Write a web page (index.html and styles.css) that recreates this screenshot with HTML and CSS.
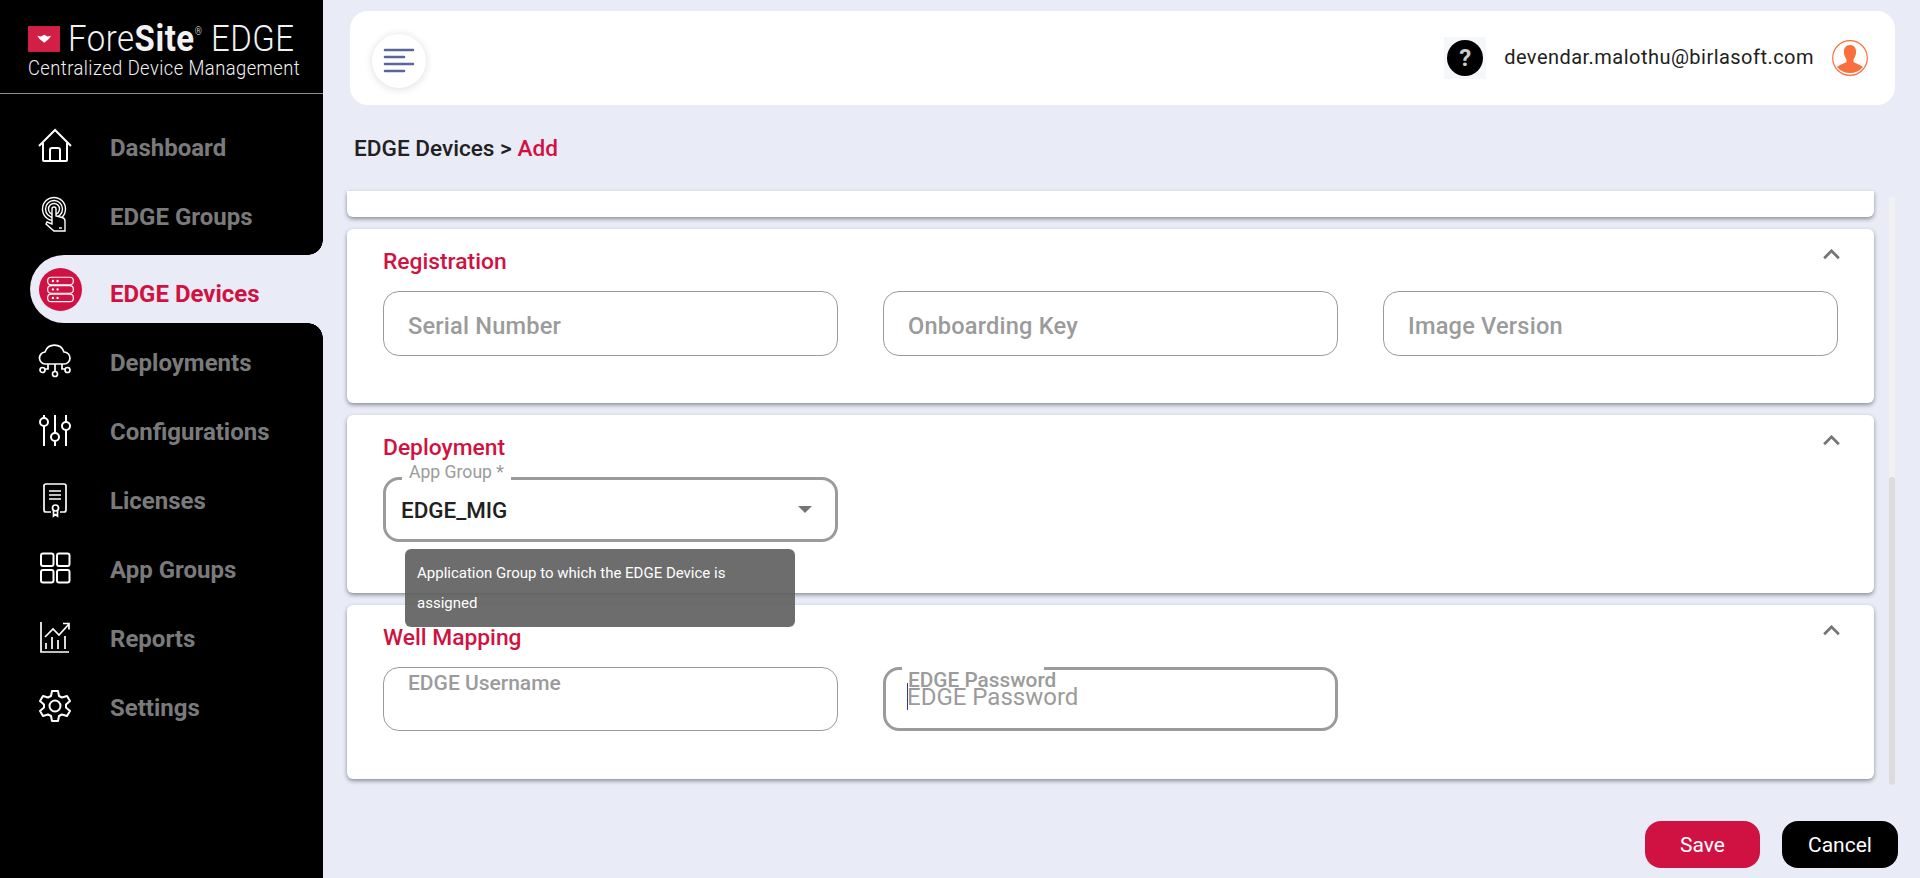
FILE: index.html
```html
<!DOCTYPE html>
<html lang="en">
<head>
    <meta charset="UTF-8">
    <title>ForeSite EDGE - Add Device</title>
    <link rel="stylesheet" href="styles.css">
</head>
<body>
<div class="app">
    <!-- Sidebar -->
    <aside class="sidebar">
        <div class="brand">
            <div class="brand-top">
                <svg class="brand-mark" viewBox="0 0 35 28"><rect width="35" height="28" fill="#d11f45"/><path d="M10 10.500l4 .8 3.500-1.800 3.500 1.800 4-.8-2.500 3.500-5 4-5-4z" fill="#fff"/></svg>
                <span class="brand-name">Fore<b>Site</b><sup>®</sup> EDGE</span>
            </div>
            <div class="brand-sub">Centralized Device Management</div>
        </div>
        <nav class="nav">
            <a class="nav-item">
                <svg class="nav-icon" viewBox="0 0 36 36"><path d="M2 18L18 2l16 16M6 15v17a1 1 0 0 0 1 1h22a1 1 0 0 0 1-1V15M13 33V22a2 2 0 0 1 2-2h6a2 2 0 0 1 2 2v11"/></svg>
                Dashboard
            </a>
            <a class="nav-item nav-before">
                <svg class="nav-icon icon-thin" viewBox="0 0 36 36"><circle cx="17" cy="12" r="11.500"/><circle cx="17" cy="12" r="8.500"/><circle cx="17" cy="12" r="5.500"/><path d="M15 12a2 2 0 0 1 4 0v7l6 1.500c2 .5 3 1.500 3 3.500v10H17l-8-7 1-2 5 2z" fill="#000"/><path d="M22 31h3"/></svg>
                EDGE Groups
            </a>
            <div class="nav-active">
                <span class="nav-badge">
                    <svg viewBox="0 0 30 30"><rect x="4" y="4.500" width="22" height="6.500" rx="3"/><rect x="4" y="11.700" width="22" height="6.500" rx="3"/><rect x="4" y="18.900" width="22" height="6.500" rx="3"/><g class="dots"><circle cx="8.500" cy="7.700" r="1"/><circle cx="12.500" cy="7.700" r="1"/><circle cx="8.500" cy="15" r="1"/><circle cx="12.500" cy="15" r="1"/><circle cx="8.500" cy="22.200" r="1"/><circle cx="12.500" cy="22.200" r="1"/></g></svg>
                </span>
                <span class="nav-active-text">EDGE Devices</span>
            </div>
            <a class="nav-item nav-after">
                <svg class="nav-icon icon-mid" viewBox="0 0 36 36"><path d="M9 21a6 6 0 0 1-1-12 10 10 0 0 1 19 0 6 6 0 0 1 0 12zM18 21v8M11 21v5H8M25 21v5h3"/><circle cx="5.500" cy="27" r="2.500"/><circle cx="18" cy="31" r="2.500"/><circle cx="30.500" cy="27" r="2.500"/></svg>
                Deployments
            </a>
            <a class="nav-item">
                <svg class="nav-icon" viewBox="0 0 36 36"><path d="M7 3v3M7 14v20M18 3v18M18 29v5M29 3v7M29 18v16"/><circle cx="7" cy="10" r="4"/><circle cx="18" cy="25" r="4"/><circle cx="29" cy="14" r="4"/></svg>
                Configurations
            </a>
            <a class="nav-item">
                <svg class="nav-icon icon-mid" viewBox="0 0 36 36"><path d="M14 31H9a2 2 0 0 1-2-2V5a2 2 0 0 1 2-2h18a2 2 0 0 1 2 2v24a2 2 0 0 1-2 2h-4M12 10h12M12 14h12M12 18h12"/><circle cx="18.500" cy="27" r="3"/><path d="M16.500 30v5l2-1.500 2 1.500v-5"/></svg>
                Licenses
            </a>
            <a class="nav-item">
                <svg class="nav-icon" viewBox="0 0 36 36"><rect x="4" y="3.500" width="12.500" height="12.500" rx="2"/><rect x="20" y="3.500" width="12.500" height="12.500" rx="2"/><rect x="4" y="20" width="12.500" height="12.500" rx="2"/><rect x="20" y="20" width="12.500" height="12.500" rx="2"/></svg>
                App Groups
            </a>
            <a class="nav-item">
                <svg class="nav-icon icon-mid" viewBox="0 0 36 36"><path d="M4 3v30h28M8 18l8-8 6 6 10-11M26 4.500h6v6M9 30v-6M15 30V18M21 30v-9M28 30V17"/></svg>
                Reports
            </a>
            <a class="nav-item">
                <svg class="nav-icon" viewBox="0 0 36 36"><path d="M15 3h6l1 5 3 1.500 5-1.500 3 5-4 3.500v3l4 3.500-3 5-5-1.500-3 1.500-1 5h-6l-1-5-3-1.500-5 1.500-3-5 4-3.500v-3L3 13l3-5 5 1.500L14 8z" stroke-linejoin="round"/><circle cx="18" cy="18" r="5.500"/></svg>
                Settings
            </a>
        </nav>
    </aside>

    <!-- Main area -->
    <main class="main">
        <header class="topbar">
            <button class="menu-btn">
                <svg viewBox="0 0 30 24"><path d="M1 2h28M1 9h19M1 16h28M1 23h19"/></svg>
            </button>
            <div class="topbar-right">
                <span class="help"><span class="help-dot">?</span></span>
                <span class="user-email">devendar.malothu@birlasoft.com</span>
                <svg class="avatar" viewBox="0 0 36 36"><circle cx="18" cy="18" r="17.300" fill="#fff" stroke="#f9703e" stroke-width="1.200"/><path d="M18 5c4.500 0 6.500 3.500 6 8-.3 3-1.500 5-2.500 6.500V22c2 1.500 7 2.500 9.500 5a17 17 0 0 1-26 0c2.500-2.500 7.500-3.500 9.500-5v-2.500C13.500 18 12.300 16 12 13c-.5-4.500 1.500-8 6-8z" fill="#f9703e"/></svg>
            </div>
        </header>

        <div class="crumbs">EDGE Devices &gt; <span class="crumb-current">Add</span></div>

        <div class="scroll-wrap">
            <div class="cards">
                <section class="card card-cut"></section>

                <section class="card card-reg">
                    <h3 class="card-title">Registration</h3>
                    <svg class="chevron" viewBox="0 0 18 12"><path d="M1 10l8-8 8 8"/></svg>
                    <div class="field-row">
                        <div class="field"><span class="placeholder">Serial Number</span></div>
                        <div class="field"><span class="placeholder">Onboarding Key</span></div>
                        <div class="field"><span class="placeholder">Image Version</span></div>
                    </div>
                </section>

                <section class="card card-dep">
                    <h3 class="card-title">Deployment</h3>
                    <svg class="chevron" viewBox="0 0 18 12"><path d="M1 10l8-8 8 8"/></svg>
                    <div class="field-row">
                        <div class="field field-focus field-select">
                            <span class="float-label">App Group *</span>
                            <span class="value">EDGE_MIG</span>
                            <span class="caret"></span>
                        </div>
                    </div>
                </section>

                <section class="card card-well">
                    <h3 class="card-title">Well Mapping</h3>
                    <svg class="chevron" viewBox="0 0 18 12"><path d="M1 10l8-8 8 8"/></svg>
                    <div class="field-row">
                        <div class="field field-tall"><span class="small-label">EDGE Username</span></div>
                        <div class="field field-tall field-focus">
                            <span class="float-label label-pass">EDGE Password</span>
                            <span class="cursor"></span>
                            <span class="pass-ph">EDGE Password</span>
                        </div>
                    </div>
                </section>

                <div class="tooltip">Application Group to which the EDGE Device is assigned</div>
            </div>
            <div class="scrollbar"><div class="scroll-thumb"></div></div>
        </div>

        <div class="actions">
            <button class="btn btn-save">Save</button>
            <button class="btn btn-cancel">Cancel</button>
        </div>
    </main>
</div>
</body>
</html>
```

FILE: styles.css
```css
/* Basic Reset */
* {
    margin: 0;
    padding: 0;
    box-sizing: border-box;
}

body {
    font-family: 'Roboto', 'Liberation Sans', sans-serif;
    background-color: #e9ebf7;
    color: #212121;
    overflow: hidden;
}

.app {
    display: flex;
    height: 878px;
}

/* Sidebar */
.sidebar {
    width: 323px;
    flex-shrink: 0;
    background-color: #000;
}

.brand {
    height: 94px;
    padding-top: 25px;
    padding-left: 28px;
    border-bottom: 1px solid #8c8c8c;
    color: #f2f2f2;
}

.brand-top {
    display: flex;
    align-items: center;
    height: 28px;
}

.brand-mark {
    width: 35px;
    height: 28px;
    margin-right: 8px;
}

.brand-name {
    display: inline-block;
    font-size: 37px;
    line-height: 28px;
    font-weight: 300;
    letter-spacing: 0.6px;
    white-space: nowrap;
    transform: scaleX(0.89);
    transform-origin: left center;
}

.brand-name b {
    font-weight: 700;
}

.brand-name sup {
    font-size: 10px;
    vertical-align: 16px;
    line-height: 0;
}

.brand-sub {
    margin-top: 3px;
    font-size: 21px;
    font-weight: 300;
    letter-spacing: 0.5px;
    white-space: nowrap;
    transform: scaleX(0.875);
    transform-origin: left center;
}

.nav {
    padding-top: 19px;
}

.nav-item,
.nav-active {
    display: flex;
    align-items: center;
    font-size: 24px;
    font-weight: 700;
    color: #7a7a7a;
}

.nav-item {
    position: relative;
    height: 69px;
    padding-left: 37px;
}

.nav-icon {
    width: 36px;
    height: 36px;
    margin-right: 37px;
    margin-bottom: 4px;
    fill: none;
    stroke: #fff;
    stroke-width: 2;
    overflow: visible;
}

.icon-thin {
    stroke-width: 1.4;
}

.icon-mid {
    stroke-width: 1.7;
}

/* the rounded notches above and below the active item */
.nav-before::after,
.nav-after::before {
    content: '';
    position: absolute;
    right: 0;
    width: 15px;
    height: 15px;
}

.nav-before::after {
    bottom: -4px;
    background: radial-gradient(circle at 0 0, #000 14.5px, #e9ebf7 15px);
}

.nav-after::before {
    top: -5px;
    background: radial-gradient(circle at 0 100%, #000 14.5px, #e9ebf7 15px);
}

.nav-active {
    height: 68px;
    margin: 4px 0 5px 30px;
    padding-left: 9px;
    color: #d01242;
    background-color: #e9ebf7;
    border-radius: 34px 0 0 34px;
}

.nav-active-text {
    margin-top: 10px;
}

.nav-badge {
    display: flex;
    align-items: center;
    justify-content: center;
    width: 43px;
    height: 43px;
    margin-right: 28px;
    background-color: #d01242;
    border-radius: 50%;
}

.nav-badge svg {
    width: 35px;
    height: 35px;
    fill: none;
    stroke: #fff;
    stroke-width: 1;
}

.nav-badge .dots {
    fill: #fff;
    stroke: none;
}

/* Main */
.main {
    flex: 1;
    min-width: 0;
    display: flex;
    flex-direction: column;
    padding: 11px 25px 0 24px;
}

.topbar {
    display: flex;
    align-items: center;
    justify-content: space-between;
    height: 94px;
    margin-left: 3px;
    padding: 0 27px 0 22px;
    background-color: #fff;
    border-radius: 18px;
}

.menu-btn {
    display: flex;
    align-items: center;
    justify-content: center;
    width: 54px;
    height: 54px;
    margin-top: 6px;
    background-color: #fff;
    border: none;
    border-radius: 50%;
    box-shadow: 0 1px 8px rgba(0, 0, 0, 0.14);
}

.menu-btn svg {
    width: 30px;
    height: 24px;
    margin-top: -3px;
    fill: none;
    stroke: #5a6699;
    stroke-width: 2.6;
    stroke-linecap: round;
    overflow: visible;
}

.topbar-right {
    display: flex;
    align-items: center;
}

.help {
    display: flex;
    align-items: center;
    justify-content: center;
    width: 42px;
    height: 42px;
    margin-right: 18px;
    background-color: #f5f7fb;
}

.help-dot {
    width: 36px;
    height: 36px;
    line-height: 36px;
    text-align: center;
    font-size: 24px;
    font-weight: 700;
    color: #ccc;
    background-color: #000;
    border-radius: 50%;
}

.user-email {
    margin-right: 18px;
    margin-bottom: 2px;
    font-size: 20px;
    letter-spacing: 0.47px;
}

.avatar {
    width: 36px;
    height: 36px;
}

.crumbs {
    height: 86px;
    padding: 30px 0 0 7px;
    font-size: 22.6px;
    font-weight: 500;
}

.crumb-current {
    color: #d01242;
}

/* Cards */
.scroll-wrap {
    display: flex;
    height: 594px;
}

.cards {
    position: relative;
    width: 1527px;
    height: 594px;
}

.card {
    position: relative;
    margin-bottom: 12px;
    padding: 21px 36px 0;
    background-color: #fff;
    border-radius: 6px;
    box-shadow: 0 2px 4px rgba(0, 0, 0, 0.4);
}

.card-cut {
    height: 26px;
    padding: 0;
    border-radius: 0 0 6px 6px;
}

.card-reg {
    height: 174px;
}

.card-dep {
    height: 178px;
}

.card-well {
    height: 174px;
}

.card-title {
    font-size: 22.8px;
    font-weight: 500;
    line-height: 24px;
    color: #d01242;
}

.chevron {
    position: absolute;
    top: 20px;
    right: 34px;
    width: 17px;
    height: 11px;
    fill: none;
    stroke: #757575;
    stroke-width: 3;
}

.field-row {
    display: flex;
    gap: 45px;
    margin-top: 17px;
}

.field {
    position: relative;
    width: 455px;
    height: 65px;
    display: flex;
    align-items: center;
    padding-left: 24px;
    border: 1px solid #9b9b9b;
    border-radius: 16px;
}

.placeholder {
    margin-top: 4px;
    font-size: 23.6px;
    font-weight: 500;
    color: #9b9b9b;
    letter-spacing: 0.2px;
}

.field-focus {
    border-width: 3px;
}

.field-select {
    height: 65px;
    padding-left: 15px;
}

.float-label {
    position: absolute;
    top: -18px;
    left: 16px;
    padding: 0 7px;
    font-size: 17.6px;
    line-height: 20px;
    color: #9b9b9b;
    background-color: #fff;
}

.value {
    margin-top: 1px;
    font-size: 22.4px;
    font-weight: 500;
}

.caret {
    position: absolute;
    right: 23px;
    top: 26px;
    border-left: 7px solid transparent;
    border-right: 7px solid transparent;
    border-top: 7px solid #757575;
}

.field-tall {
    height: 64px;
    align-items: flex-start;
}

.small-label {
    margin-top: 3px;
    font-size: 21px;
    font-weight: 500;
    color: #9b9b9b;
}

.label-pass {
    top: -3px;
    width: 142px;
    padding: 0 0 0 6px;
    font-size: 20.8px;
    line-height: 26px;
    font-weight: 500;
    white-space: nowrap;
}

.cursor {
    position: absolute;
    top: 13px;
    left: 21px;
    width: 1px;
    height: 27px;
    background-color: #2a3ba0;
}

.pass-ph {
    position: absolute;
    top: 13px;
    left: 21px;
    font-size: 24px;
    line-height: 28px;
    color: #9b9b9b;
}

.tooltip {
    position: absolute;
    top: 358px;
    left: 58px;
    width: 390px;
    height: 78px;
    padding: 9px 12px;
    font-size: 15px;
    line-height: 30px;
    color: #fff;
    background-color: rgba(97, 97, 97, 0.92);
    border-radius: 6px;
}

.scrollbar {
    width: 9px;
    height: 588px;
    margin: 6px 0 0 15px;
    background-color: #f1f1f1;
    border-radius: 0 0 5px 5px;
}

.scroll-thumb {
    height: 308px;
    margin-top: 280px;
    background-color: #dcdcdc;
    border-radius: 5px;
}

/* Footer buttons */
.actions {
    display: flex;
    justify-content: flex-end;
    gap: 22px;
    margin-right: -3px;
    padding-top: 36px;
}

.btn {
    width: 115px;
    height: 47px;
    font-family: inherit;
    font-size: 21px;
    color: #fff;
    border: none;
    border-radius: 16px;
}

.btn-save {
    background-color: #d01242;
}

.btn-cancel {
    width: 116px;
    background-color: #000;
}
```
